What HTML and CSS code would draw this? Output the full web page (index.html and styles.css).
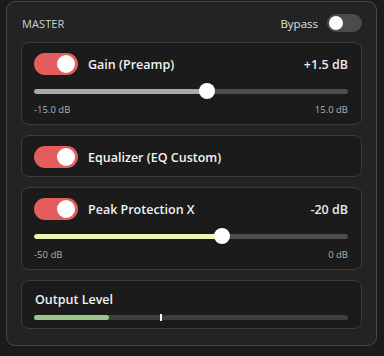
FILE: index.html
```html
<!DOCTYPE html>
<html>
<head>
<meta charset="utf-8">
<link rel="stylesheet" href="styles.css">
</head>
<body>
<div class="panel">
  <div class="header">
    <span class="title">MASTER</span>
    <div class="bypass">
      <span class="bypass-label">Bypass</span>
      <span class="toggle small off"><span class="knob"></span></span>
    </div>
  </div>

  <div class="card">
    <div class="row">
      <span class="toggle on"><span class="knob"></span></span>
      <span class="name">Gain (Preamp)</span>
      <span class="value">+1.5 dB</span>
    </div>
    <div class="slider">
      <div class="track"><div class="fill grey" style="width:55%"></div></div>
      <div class="thumb" style="left:55%"></div>
    </div>
    <div class="limits"><span>-15.0 dB</span><span>15.0 dB</span></div>
  </div>

  <div class="card">
    <div class="row">
      <span class="toggle on"><span class="knob"></span></span>
      <span class="name">Equalizer (EQ Custom)</span>
    </div>
  </div>

  <div class="card">
    <div class="row">
      <span class="toggle on"><span class="knob"></span></span>
      <span class="name">Peak Protection X</span>
      <span class="value">-20 dB</span>
    </div>
    <div class="slider">
      <div class="track"><div class="fill lime" style="width:60%"></div></div>
      <div class="thumb" style="left:60%"></div>
    </div>
    <div class="limits"><span>-50 dB</span><span>0 dB</span></div>
  </div>

  <div class="card">
    <div class="name out">Output Level</div>
    <div class="meter">
      <div class="meter-fill" style="width:24%"></div>
      <div class="peak" style="left:40%"></div>
    </div>
  </div>
</div>
</body>
</html>
```
FILE: styles.css
```css
* { box-sizing: border-box; }
html, body { margin: 0; padding: 0; }
body {
  background: #1b1b1b;
  font-family: "Open Sans", "Noto Sans", sans-serif;
  color: #f0f0f0;
  width: 384px;
  height: 356px;
  overflow: hidden;
}
.panel {
  margin: 1px 7px 0 6px;
  height: 345px;
  background: #232323;
  border: 1px solid #474747;
  border-radius: 9px;
  padding: 12px 14px 12px 14px;
  display: flex;
  flex-direction: column;
  gap: 10px;
}
.header {
  display: flex;
  align-items: center;
  justify-content: space-between;
  height: 18px;
  padding-left: 1px;
}
.title {
  font-size: 11px;
  color: #d0d0d0;
  letter-spacing: 0.1px;
}
.bypass {
  display: flex;
  align-items: center;
  gap: 9px;
}
.bypass-label {
  font-size: 11.5px;
  color: #e0e0e0;
}
.card {
  background: #1b1b1b;
  border: 1px solid #3c3c3c;
  border-radius: 8px;
  padding: 10px 13px 8px 12px;
}
.row {
  display: flex;
  align-items: center;
  height: 22px;
}
.toggle {
  position: relative;
  display: inline-block;
  width: 44px;
  height: 22px;
  border-radius: 11px;
  background: #e35d5d;
  flex: none;
}
.toggle .knob {
  position: absolute;
  top: 2px;
  right: 3px;
  width: 18px;
  height: 18px;
  border-radius: 50%;
  background: #ffffff;
}
.toggle.small {
  width: 35px;
  height: 18px;
  border-radius: 9px;
  background: #4b4b4b;
}
.toggle.small .knob {
  top: 2px;
  left: 2px;
  right: auto;
  width: 14px;
  height: 14px;
}
.name {
  margin-left: 10px;
  font-size: 12.5px;
  font-weight: 600;
  color: #f2f2f2;
}
.value {
  margin-left: auto;
  font-size: 12.5px;
  font-weight: 600;
  color: #eaeaea;
}
.slider {
  position: relative;
  height: 16px;
  margin-top: 8px;
  display: flex;
  align-items: center;
}
.track {
  width: 100%;
  height: 5px;
  background: #4d4d4d;
  border-radius: 3px;
  overflow: hidden;
}
.fill { height: 100%; border-radius: 3px; }
.fill.grey { background: #a9a9a9; }
.fill.lime { background: #ecf7b4; }
.thumb {
  position: absolute;
  top: 0;
  width: 16px;
  height: 16px;
  margin-left: -8px;
  border-radius: 50%;
  background: #ffffff;
}
.limits {
  display: flex;
  justify-content: space-between;
  margin-top: 5px;
  font-size: 9.5px;
  line-height: 12px;
  color: #b0b0b0;
}
.name.out {
  margin-left: 0;
  line-height: 18px;
  padding-left: 1px;
}
.meter {
  position: relative;
  margin-top: 6px;
  height: 5px;
  background: #3e3e3e;
  border-radius: 3px;
}
.meter-fill {
  height: 100%;
  background: #9bc587;
  border-radius: 3px;
}
.peak {
  position: absolute;
  top: -1px;
  width: 2px;
  height: 7px;
  background: #ffffff;
}
```
